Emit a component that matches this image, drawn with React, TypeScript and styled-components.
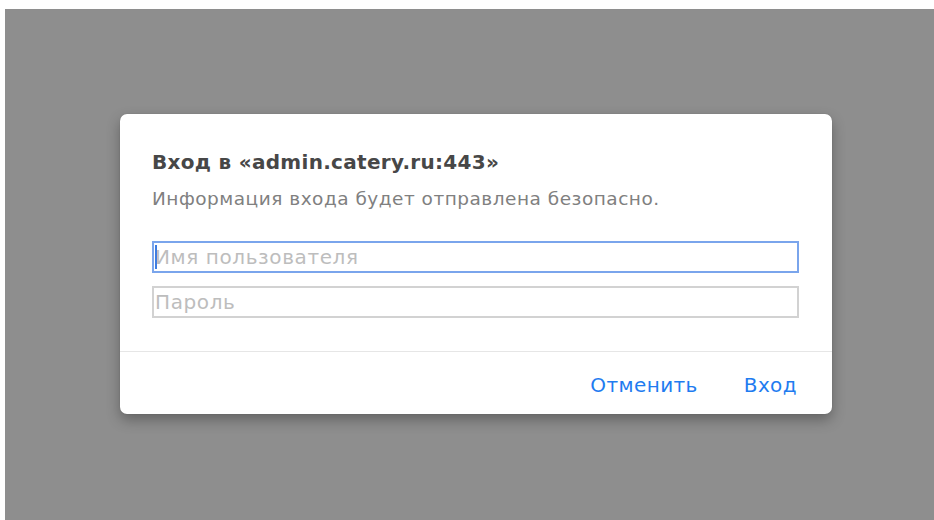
import { styled, createGlobalStyle } from "styled-components";

const GlobalStyle = createGlobalStyle`
  html, body {
    margin: 0;
    padding: 0;
    background: #ffffff;
  }

  body {
    font-family: "DejaVu Sans", "Noto Sans", "Liberation Sans", sans-serif;
    -webkit-font-smoothing: antialiased;
  }
`;

const Backdrop = styled.div`
  display: flex;
  align-items: flex-start;
  box-sizing: border-box;
  margin: 9px 0 0 5px;
  height: 511px;
  padding: 105px 0 0 115px;
  background: #8e8e8e;
`;

const Dialog = styled.div`
  display: flex;
  flex-direction: column;
  width: 712px;
  height: 300px;
  background: #ffffff;
  border-radius: 7px;
  box-shadow: 0 6px 14px rgba(0, 0, 0, 0.3), 0 0 1px rgba(0, 0, 0, 0.25);
  overflow: hidden;
`;

const Body = styled.div`
  display: flex;
  flex-direction: column;
  padding: 36px 32px 0 32px;
  flex: 1;
`;

const Title = styled.h2`
  margin: 0;
  font-size: 20px;
  line-height: 24px;
  font-weight: 700;
  letter-spacing: 0.3px;
  color: #474747;
`;

const Subtitle = styled.p`
  margin: 13px 0 0;
  font-size: 18.5px;
  line-height: 24px;
  letter-spacing: 0.5px;
  color: #808080;
`;

const Fields = styled.div`
  display: flex;
  flex-direction: column;
  gap: 13px;
  margin-top: 30px;
`;

const Field = styled.input<{ $focused?: boolean }>`
  box-sizing: border-box;
  width: 647px;
  height: 32px;
  margin: 0;
  padding: 0 1px;
  font-family: inherit;
  font-size: 20px;
  letter-spacing: 0.6px;
  color: #333;
  background: #fff;
  border: 2px solid ${(p) => (p.$focused ? "#7aa5ec" : "#d2d2d2")};
  border-radius: 0;
  outline: none;
  caret-color: #2b6fd6;

  &::placeholder {
    color: #bdbdbd;
  }
`;

const FieldWrap = styled.div`
  position: relative;
`;

const Caret = styled.span`
  position: absolute;
  left: 3px;
  top: 4px;
  width: 2px;
  height: 24px;
  background: #3f7de0;
`;

const Footer = styled.div`
  display: flex;
  flex-shrink: 0;
  justify-content: flex-end;
  align-items: center;
  gap: 46px;
  height: 63px;
  padding: 3px 35px 0 0;
  box-sizing: border-box;
  border-top: 1px solid #e6e6e6;
`;

const ActionButton = styled.button`
  margin: 0;
  padding: 0;
  border: none;
  background: none;
  font-family: inherit;
  font-size: 20px;
  font-weight: 400;
  letter-spacing: 0.4px;
  color: #1f7cf0;
  cursor: pointer;
`;

export default function App() {
  return (
    <>
      <GlobalStyle />
      <Backdrop>
        <Dialog>
          <Body>
            <Title>Вход в «admin.catery.ru:443»</Title>
            <Subtitle>Информация входа будет отправлена безопасно.</Subtitle>
            <Fields>
              <FieldWrap>
                <Field $focused placeholder="Имя пользователя" />
                <Caret />
              </FieldWrap>
              <Field type="password" placeholder="Пароль" />
            </Fields>
          </Body>
          <Footer>
            <ActionButton>Отменить</ActionButton>
            <ActionButton>Вход</ActionButton>
          </Footer>
        </Dialog>
      </Backdrop>
    </>
  );
}
